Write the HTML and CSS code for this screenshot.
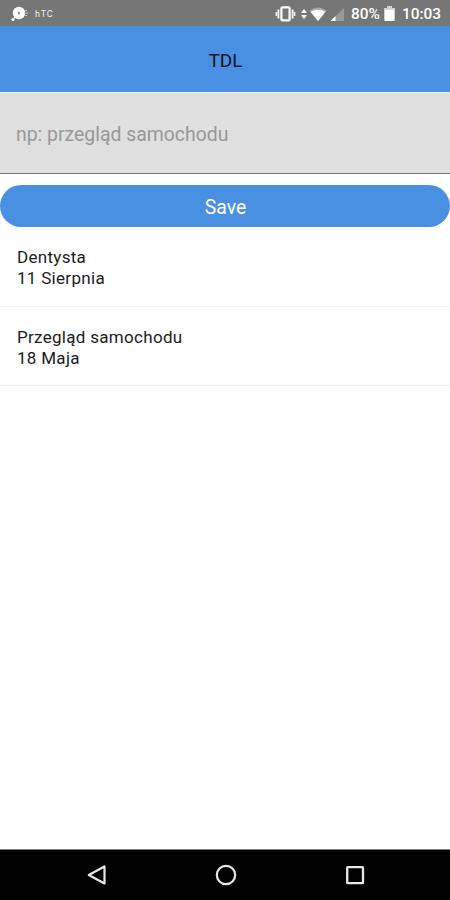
FILE: index.html
```html
<!DOCTYPE html>
<html lang="pl">
<head>
  <meta charset="UTF-8" />
  <meta name="viewport" content="width=device-width, initial-scale=1.0"/>
  <title>TDL</title>
  <link rel="stylesheet" href="styles.css">
</head>
<body>

  <div class="status-bar">
    <svg class="notify-icon" width="18" height="16" viewBox="0 0 18 16">
      <circle cx="8" cy="7" r="6.2" fill="#fff"/>
      <circle cx="2" cy="13.5" r="1.5" fill="#fff"/>
      <path d="M3 12l3-2" stroke="#fff" stroke-width="2"/>
      <path d="M13 4.5h3M13 7h4M13 9.5h3" stroke="#c4c4c4" stroke-width="1.2"/>
      <ellipse cx="8" cy="7" rx="1" ry="1.5" fill="#888"/>
    </svg>
    <span class="carrier">hTC</span>

    <div class="status-right">
      <svg width="70" height="18" viewBox="0 0 70 18">
        <rect x="6.4" y="2.4" width="8.2" height="13" rx="1" fill="none" stroke="#fff" stroke-width="2.2"/>
        <path d="M3.4 4.5v9M17.6 4.5v9" stroke="#fff" stroke-width="1.8"/>
        <path d="M1.3 7v4M19.7 7v4" stroke="#fff" stroke-width="1.3"/>
        <path d="M26 8l3-4 3 4zM26 10h6l-3 4z" fill="#fff"/>
        <path d="M34.5 5.5Q43-.5 51.5 5.5L43 16z" fill="#a8a8a8"/>
        <path d="M35.5 6.8Q43 2.5 50.5 6.8L43 16z" fill="#fff"/>
        <path d="M55.5 16L69 3v13z" fill="#999"/>
        <path d="M55.5 16l5-5v5z" fill="#fff"/>
      </svg>
      <span class="percent">80%</span>
      <svg class="battery" width="11" height="15" viewBox="0 0 11 16">
        <path d="M0 2h3V0h5v2h3v13a1 1 0 0 1-1 1H1a1 1 0 0 1-1-1z" fill="#fff"/>
        <path d="M0 2h3V0h5v2h3v2H0z" fill="#d0d0d0"/>
      </svg>
      <span class="clock">10:03</span>
    </div>
  </div>

  <header class="header">TDL</header>

  <input class="task-input" type="text" placeholder="np: przegląd samochodu">

  <button class="save-btn">Save</button>

  <ul class="task-list">
    <li class="task">
      <div class="task-name">Dentysta</div>
      <div class="task-date">11 Sierpnia</div>
    </li>
    <li class="task">
      <div class="task-name">Przegląd samochodu</div>
      <div class="task-date">18 Maja</div>
    </li>
  </ul>

  <nav class="nav-bar">
    <svg width="20" height="22" viewBox="0 0 20 22">
      <path d="M17.5 2.5v17L1.8 11z" fill="none" stroke="#e8e8e8" stroke-width="2.2" stroke-linejoin="round"/>
    </svg>
    <svg width="22" height="22" viewBox="0 0 22 22">
      <circle cx="11" cy="11" r="9.2" fill="none" stroke="#e8e8e8" stroke-width="2.2"/>
    </svg>
    <svg width="20" height="22" viewBox="0 0 20 22">
      <rect x="2.2" y="3.2" width="15.8" height="16" rx=".5" fill="none" stroke="#e8e8e8" stroke-width="2.3"/>
    </svg>
  </nav>

</body>
</html>
```

FILE: styles.css
```css
* {
  margin: 0;
  padding: 0;
  box-sizing: border-box;
}

body {
  height: 900px;
  display: flex;
  flex-direction: column;
  font-family: Roboto, sans-serif;
  background: #fff;
  color: #1c1c1c;
  overflow: hidden;
}

.status-bar {
  height: 26px;
  flex-shrink: 0;
  display: flex;
  align-items: center;
  padding: 1px 9px 0 11px;
  background: #767676;
  color: #fff;
}

.carrier {
  margin-left: 6px;
  font-size: 9px;
  line-height: 10px;
  letter-spacing: 0.8px;
  color: #eee;
}

.status-right {
  margin-left: auto;
  display: flex;
  align-items: center;
  font-size: 15.4px;
  font-weight: 500;
}

.percent {
  margin-left: 6px;
}

.battery {
  margin: 0 7px 0 4px;
}

.header {
  height: 66px;
  flex-shrink: 0;
  display: flex;
  align-items: center;
  justify-content: center;
  padding: 3px 0 0 1px;
  background: #4a90e2;
  color: #0b1622;
  font-size: 19px;
  font-weight: 400;
}

.task-input {
  width: 100%;
  height: 82px;
  flex-shrink: 0;
  padding: 2px 16px 0;
  border: none;
  border-top: 1px solid #eee;
  border-bottom: 1px solid #757575;
  background: #e0e0e0;
  font-family: inherit;
  font-size: 19.4px;
  outline: none;
}

.task-input::placeholder {
  color: #989898;
}

.save-btn {
  height: 42px;
  flex-shrink: 0;
  margin-top: 11px;
  padding: 2px 0 0 1px;
  border: none;
  border-radius: 21px;
  background: #4a90e2;
  color: #fff;
  font-family: inherit;
  font-size: 19.4px;
}

.task-list {
  flex: 1;
  list-style: none;
}

.task {
  height: 79px;
  padding: 20px 17px 0;
  border-bottom: 1px solid #f2f2f2;
  font-size: 17px;
  letter-spacing: 0.3px;
  line-height: 21px;
}

.task:first-child {
  height: 80px;
}

.nav-bar {
  height: 51px;
  flex-shrink: 0;
  display: flex;
  align-items: center;
  justify-content: space-between;
  padding: 0 85px 0 87px;
  border-top: 1px solid #777;
  background: #000;
}
```
